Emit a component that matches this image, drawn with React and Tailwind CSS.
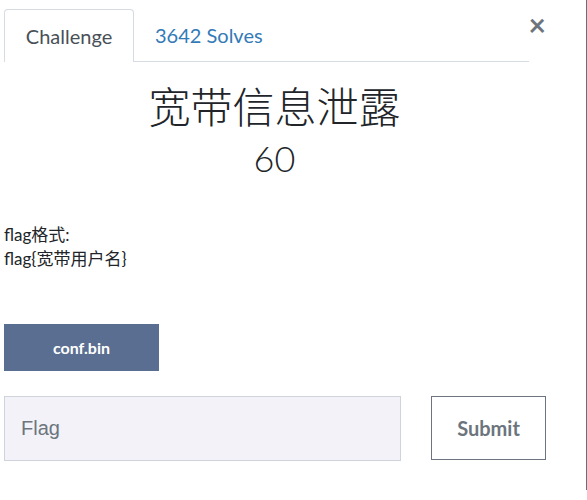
import React from 'react';

export default function App() {
  return (
    <div className="w-[587px] h-[500px] bg-white relative" style={{ fontFamily: 'Lato, "Noto Sans CJK SC", sans-serif' }}>
      <div className="absolute right-0 top-0 w-px h-[490px] bg-[#6b6f78]" />

      {/* Tabs */}
      <div className="flex items-start pt-[9px] pl-1 pr-[58px]">
        <div className="flex flex-1 items-end">
          <div className="h-[53px] w-[130px] border border-b-0 border-[#d6dbe3] rounded-t-[4px] flex items-center justify-center text-[20px] text-[#495057]">
            Challenge
          </div>
          <div className="flex-1 h-[53px] border-b border-[#d6dbe3] flex items-center pl-[21px] text-[20px] text-[#337ab7]">
            3642 Solves
          </div>
        </div>
        <button className="absolute right-[41px] top-[9px] text-[#6c757d] text-[30px] leading-none font-bold">×</button>
      </div>

      {/* Title */}
      <div className="flex flex-col items-center pr-[38px]">
        <h1 className="mt-[19px] text-[42px] leading-[52px] font-light text-[#212529]">宽带信息泄露</h1>
        <p className="mt-[3px] text-[36px] leading-[44px] font-light text-[#212529]">60</p>
      </div>

      {/* Description */}
      <div className="pl-1 mt-[43px] text-[17px] leading-[24px] text-[#212529]">
        <p>flag格式:</p>
        <p>flag{'{'}宽带用户名{'}'}</p>
      </div>

      <div className="pl-1 mt-[53px]">
        <button className="w-[155px] h-[47px] bg-[#5a6e91] text-white text-[16px] font-bold">conf.bin</button>
      </div>

      {/* Flag form */}
      <div className="flex items-start pl-1 mt-[25px] gap-[30px]">
        <input
          placeholder="Flag"
          className="w-[397px] h-[65px] bg-[#f3f2f9] border border-[#cfd3dc] px-[16px] text-[20px] placeholder-[#6c757d] outline-none"
          style={{ fontFamily: '"Liberation Sans", Arial, sans-serif' }}
        />
        <button className="w-[115px] h-[64px] border border-[#6c757d] text-[#6c757d] text-[20px] font-bold">Submit</button>
      </div>
    </div>
  );
}
